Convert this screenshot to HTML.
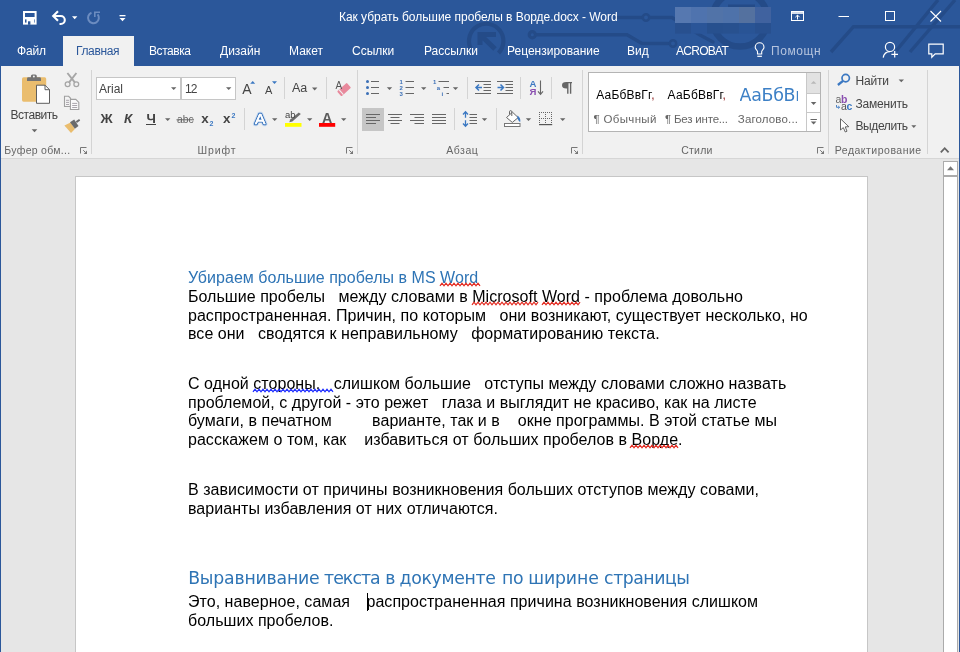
<!DOCTYPE html>
<html lang="ru">
<head>
<meta charset="utf-8">
<title>Как убрать большие пробелы в Ворде.docx - Word</title>
<style>
html,body{margin:0;padding:0;}
body{width:960px;height:652px;overflow:hidden;background:#e6e6e6;font-family:"Liberation Sans",sans-serif;font-size:12px;color:#444;}
#app{position:relative;width:960px;height:652px;overflow:hidden;will-change:transform;}
.abs{position:absolute;}
#top{position:absolute;left:0;top:0;width:960px;height:66px;background:#2b579a;overflow:hidden;}
#top .t{position:absolute;color:#fff;font-size:12px;line-height:14px;white-space:pre;}
#ribbon{position:absolute;left:1px;top:66px;width:958px;height:92px;background:#f1f1f1;}
#ribbon .l{position:absolute;white-space:pre;font-size:12px;line-height:14px;color:#444;}
#ribbon .gl{position:absolute;white-space:pre;font-size:12px;line-height:14px;color:#666;}
.vsep{position:absolute;width:1px;background:#d4d4d4;}
svg{position:absolute;overflow:visible;}
#doc{position:absolute;left:1px;top:159px;width:958px;height:493px;background:#e6e6e6;}
#page{position:absolute;left:75px;top:176px;width:791px;height:480px;background:#fff;border:1px solid #c6c6c6;}
.ln{position:absolute;left:188px;white-space:pre;font-family:"Liberation Sans",sans-serif;font-size:16px;line-height:18px;color:#000;letter-spacing:0.037px;}
.h1{color:#2e74b5;}
.h2{font-family:"DejaVu Sans",sans-serif;font-size:17.3px;line-height:20px;color:#2e74b5;letter-spacing:-0.37px;}
</style>
</head>
<body>
<div id="app">
<!--TOP-->
<div id="top">
<!--TOPCONTENT-->
<svg style="left:0;top:0" width="960" height="66" viewBox="0 0 960 66">
<g fill="none" stroke="#244b88" stroke-width="3.4" stroke-linecap="round">
<path d="M498.5 53 A17.2 17.2 0 1 0 470.5 48" stroke-width="4.2" stroke-linecap="butt"/>
<path d="M480 45 V34.5 H496 M481 35.5 L495 49" stroke-width="5" stroke-linecap="butt"/>
<circle cx="532.3" cy="34.8" r="3.1" stroke-width="3.2"/>
<path d="M536.5 34.8 H627 L642 43.5 H668"/>
<circle cx="673" cy="43.5" r="3.2" stroke-width="2.5"/>
<path d="M616 17.5 H642"/>
<circle cx="646" cy="17.5" r="3.2" stroke-width="2.5"/>
<path d="M650 17.5 H672 L700 35 L713 42"/>
<circle cx="740" cy="19" r="27.5" stroke-width="6.5"/>
<path d="M831 52 L853.5 26.7 H960" stroke-linecap="butt"/>
<path d="M896.5 50.5 L938 0" stroke-linecap="butt"/>
<path d="M910 52 L955 0" stroke-linecap="butt"/>
</g>
<!-- save -->
<rect x="24" y="12" width="11.6" height="11.6" fill="none" stroke="#fff" stroke-width="2"/>
<rect x="24" y="17" width="12" height="2.4" fill="#fff"/>
<rect x="26.5" y="19" width="7.5" height="5" fill="#fff"/>
<rect x="28" y="21.3" width="2.4" height="3.5" fill="#2b579a"/>
<!-- undo -->
<g fill="none" stroke="#fff" stroke-width="2.1">
<path d="M53.5 16 H60.8 A4 4 0 0 1 60.8 24 H59.5"/>
<path d="M58 11.2 L53.2 16 L58 20.8"/>
</g>
<path d="M72 16.2 H77.4 L74.7 19.3 Z" fill="#fff"/>
<!-- redo dim -->
<g fill="none" stroke="#6c8cc0" stroke-width="2">
<path d="M97.6 14.4 A5.4 5.4 0 1 1 91.5 12.8"/>
<path d="M94.8 17 V12.2 H100" stroke-width="1.6"/>
</g>
<!-- customize -->
<rect x="119.5" y="15" width="6" height="1.3" fill="#fff"/>
<path d="M119.5 18 H125.5 L122.5 21.3 Z" fill="#fff"/>
<!-- user blur -->
<rect x="728" y="4.5" width="27" height="2.6" fill="#244b88"/>
<g>
<rect x="675" y="7" width="16" height="16" fill="#5678b0"/>
<rect x="675" y="23" width="16" height="10.6" fill="#28508f"/>
<rect x="691" y="7" width="16" height="16" fill="#4f73ae"/>
<rect x="691" y="23" width="16" height="10.6" fill="#2a5598"/>
<rect x="707" y="7" width="16" height="16" fill="#5173a8"/>
<rect x="707" y="23" width="16" height="10.6" fill="#27508e"/>
<rect x="723" y="7" width="16" height="16" fill="#4e72aa"/>
<rect x="723" y="23" width="16" height="10.6" fill="#28518f"/>
<rect x="739" y="7" width="16" height="16" fill="#54719f"/>
<rect x="739" y="23" width="16" height="10.6" fill="#295495"/>
<rect x="755" y="7" width="16" height="16" fill="#40629f"/>
<rect x="755" y="23" width="16" height="10.6" fill="#28508f"/>
</g>
<!-- ribbon display options -->
<g fill="none" stroke="#fff" stroke-width="1">
<rect x="791.5" y="11.5" width="12" height="9"/>
<path d="M791.5 13 H803.5" stroke-width="1.6"/>
<path d="M797.5 19.5 V15.2 M795.4 17.2 L797.5 15.1 L799.6 17.2"/>
</g>
<!-- minimize -->
<rect x="838.5" y="16" width="10.5" height="1" fill="#fff"/>
<!-- maximize -->
<rect x="885.5" y="11.5" width="9" height="9" fill="none" stroke="#fff" stroke-width="1"/>
<!-- close -->
<path d="M930.5 11 L941 21.5 M941 11 L930.5 21.5" stroke="#fff" stroke-width="1.1" fill="none"/>
<!-- lightbulb -->
<g fill="none" stroke="#fff" stroke-width="1.1">
<path d="M757.5 54 V51.6 C757.5 50.1 755.2 49.3 755.2 47.2 A4.4 4.4 0 0 1 764 47.2 C764 49.3 761.7 50.1 761.7 51.6 V54 Z"/>
<path d="M757.3 56.3 H761.9" stroke-width="1.2"/>
</g>
<!-- share -->
<g fill="none" stroke="#fff" stroke-width="1.2">
<circle cx="890" cy="46.9" r="4.6"/>
<path d="M883.2 57.6 C883.9 53.8 886.5 51.6 890 51.6"/>
<path d="M894.7 51 V57.6 M891.4 54.3 H898" stroke-width="1.2"/>
</g>
<!-- comment -->
<path d="M928.8 44.2 H943.2 V53.8 H935.2 L931.8 57.2 V53.8 H928.8 Z" fill="none" stroke="#fff" stroke-width="1.2"/>
</svg>
<div class="abs" style="left:63px;top:36px;width:71px;height:30px;background:#f1f1f1"></div>
<div class="t" style="left:339px;top:10px;letter-spacing:-0.04px">Как убрать большие пробелы в Ворде.docx - Word</div>
<div class="t" style="left:17px;top:44px;letter-spacing:-0.2px">Файл</div>
<div class="t" style="left:76px;top:44px;color:#2b579a;letter-spacing:-0.36px">Главная</div>
<div class="t" style="left:149px;top:44px;letter-spacing:-0.43px">Вставка</div>
<div class="t" style="left:220px;top:44px">Дизайн</div>
<div class="t" style="left:289px;top:44px">Макет</div>
<div class="t" style="left:352px;top:44px">Ссылки</div>
<div class="t" style="left:424px;top:44px">Рассылки</div>
<div class="t" style="left:507px;top:44px">Рецензирование</div>
<div class="t" style="left:627px;top:44px">Вид</div>
<div class="t" style="left:676px;top:44px;letter-spacing:-0.73px">ACROBAT</div>
<div class="t" style="left:771px;top:44px;color:#b5c4de;letter-spacing:0.6px">Помощн</div>
<!--/TOPCONTENT-->
</div>
<!--RIBBON-->
<div id="ribbon">
<!--RIBBONCONTENT-->
<div id="rc" style="position:absolute;left:-1px;top:-66px;width:960px;height:160px">
<!-- separators -->
<div class="vsep" style="left:91px;top:70px;height:84px"></div>
<div class="vsep" style="left:357px;top:70px;height:84px"></div>
<div class="vsep" style="left:582px;top:70px;height:84px"></div>
<div class="vsep" style="left:828px;top:70px;height:84px"></div>
<div class="vsep" style="left:927px;top:70px;height:84px"></div>
<div class="vsep" style="left:284px;top:77px;height:22px"></div>
<div class="vsep" style="left:326px;top:77px;height:22px"></div>
<div class="vsep" style="left:244px;top:108px;height:22px"></div>
<div class="vsep" style="left:467px;top:77px;height:22px"></div>
<div class="vsep" style="left:520px;top:77px;height:22px"></div>
<div class="vsep" style="left:551px;top:77px;height:22px"></div>
<div class="vsep" style="left:454px;top:108px;height:22px"></div>
<div class="vsep" style="left:496px;top:108px;height:22px"></div>
<!-- font boxes -->
<div class="abs" style="left:96px;top:77px;width:83px;height:21px;background:#fff;border:1px solid #c6c6c6"></div>
<div class="abs" style="left:181px;top:77px;width:53px;height:21px;background:#fff;border:1px solid #c6c6c6"></div>
<!-- align-left selected -->
<div class="abs" style="left:362px;top:108px;width:22px;height:23px;background:#c6c6c6"></div>
<!-- gallery -->
<div class="abs" style="left:588px;top:72px;width:232px;height:59px;background:#fff;border:1px solid #b4b4b4;box-sizing:content-box;width:231px;height:58px"></div>
<div class="abs" style="left:807px;top:73px;width:13px;height:20px;background:#e2e2e2"></div>
<div class="abs" style="left:806px;top:73px;width:1px;height:58px;background:#c8c8c8"></div>
<div class="abs" style="left:807px;top:93px;width:13px;height:1px;background:#c8c8c8"></div>
<div class="abs" style="left:807px;top:112px;width:13px;height:1px;background:#c8c8c8"></div>
<svg style="left:0;top:0" width="960" height="160" viewBox="0 0 960 160" font-family="Liberation Sans, sans-serif">
<!-- paste -->
<rect x="22" y="77.3" width="24.2" height="24.4" rx="1.6" fill="#eabd6e"/>
<path d="M27 81 V78.6 A1.4 1.4 0 0 1 28.4 77.2 H39.6 A1.4 1.4 0 0 1 41 78.6 V81 Z" fill="#737373"/>
<path d="M30.9 78 V76 A1.6 1.6 0 0 1 32.5 74.4 H35.2 A1.6 1.6 0 0 1 36.8 76 V78 Z" fill="#737373"/>
<circle cx="33.85" cy="76.5" r="1" fill="#f1f1f1"/>
<path d="M36.5 85.2 H45 L49.5 89.7 V103.3 H36.5 Z" fill="#fff" stroke="#5e5e5e" stroke-width="1"/>
<path d="M45 85.2 V89.7 H49.5" fill="none" stroke="#5e5e5e" stroke-width="1"/>
<path d="M31.7 129.2 H37.3 L34.5 132.2 Z" fill="#666"/>
<!-- scissors -->
<g fill="none" stroke="#a6a6a6" stroke-width="1.3">
<circle cx="67.6" cy="84.2" r="2.4"/>
<circle cx="76.3" cy="84.2" r="2.4"/>
<path d="M67.4 73 L74.8 82.4 M76.4 73 L69.1 82.4" stroke-width="1.9"/>
</g>
<!-- copy -->
<g fill="#f4f4f4" stroke="#a0a0a0" stroke-width="1.1">
<path d="M64.5 96.3 H68.6 L70.6 98.3 V106.5 H64.5 Z"/>
<path d="M70.4 99.4 H75.8 L78.8 102.4 V109.5 H70.4 Z" fill="#fafafa"/>
</g>
<g stroke="#aaa6ad" stroke-width="1" fill="none">
<path d="M66 100.3 H69 M66 102.4 H69 M66 104.5 H69 M72.2 103.4 H77.2 M72.2 105.5 H77.2 M72.2 107.5 H77.2"/>
</g>
<!-- format painter -->
<path d="M64.4 125.4 L70.6 122.6 L74.9 129 L71 132.9 Z" fill="#eabd6e"/>
<path d="M70 122.3 L74.2 119.6 L78.5 125.9 L74.9 128.7 Z" fill="#6b6b6b"/>
<path d="M75.8 121.2 L79.1 118.9 L80.2 120.5 L76.9 122.9 Z" fill="#6b6b6b"/>
<!-- launchers -->
<g fill="none" stroke="#777" stroke-width="1">
<path d="M80.5 153.5 V147.5 H86.5"/>
<path d="M83.2 150.2 L85.5 152.5"/>
<path d="M87 150.6 V154 H83.6 Z" fill="#777" stroke="none"/>
</g>
<g transform="translate(266 0)" fill="none" stroke="#777" stroke-width="1">
<path d="M80.5 153.5 V147.5 H86.5"/>
<path d="M83.2 150.2 L85.5 152.5"/>
<path d="M87 150.6 V154 H83.6 Z" fill="#777" stroke="none"/>
</g>
<g transform="translate(491 0)" fill="none" stroke="#777" stroke-width="1">
<path d="M80.5 153.5 V147.5 H86.5"/>
<path d="M83.2 150.2 L85.5 152.5"/>
<path d="M87 150.6 V154 H83.6 Z" fill="#777" stroke="none"/>
</g>
<g transform="translate(737 0)" fill="none" stroke="#777" stroke-width="1">
<path d="M80.5 153.5 V147.5 H86.5"/>
<path d="M83.2 150.2 L85.5 152.5"/>
<path d="M87 150.6 V154 H83.6 Z" fill="#777" stroke="none"/>
</g>
<!-- font box arrows -->
<path d="M171 87.2 H176.4 L173.7 90 Z" fill="#666"/>
<path d="M226 87.2 H231.4 L228.7 90 Z" fill="#666"/>
<!-- underline for Ч and arrow -->
<rect x="146" y="124" width="10" height="1" fill="#444"/>
<path d="M165 118.2 H170.4 L167.7 121 Z" fill="#666"/>
<!-- abc strike -->
<rect x="176.5" y="119.3" width="17.5" height="1" fill="#666"/>
<!-- grow/shrink -->
<path d="M250.2 83.8 H255.2 L252.7 81 Z" fill="#3b78c2"/>
<path d="M272 81.2 H277 L274.5 84 Z" fill="#3b78c2"/>
<path d="M312 87.6 H317.4 L314.7 90.4 Z" fill="#666"/>
<!-- clear formatting eraser -->
<g transform="rotate(-42 344 89.5)">
<rect x="337.5" y="86.3" width="13" height="6.6" rx="1" fill="#e8899c"/>
<rect x="339.6" y="86.3" width="1.1" height="6.6" fill="#f1f1f1"/>
</g>
<!-- text effects arrows etc -->
<path d="M272 118.2 H277.4 L274.7 121 Z" fill="#666"/>
<rect x="285" y="123" width="16.5" height="3.8" fill="#ffff00"/>
<path d="M289.3 122.3 L290.2 119.6 L298.8 112.4 L300.8 114 L292.4 121.6 Z" fill="#6d6d6d"/>
<path d="M307 118.2 H312.4 L309.7 121 Z" fill="#666"/>
<rect x="319" y="123" width="16.2" height="3.8" fill="#ff0000"/>
<path d="M341 118.2 H346.4 L343.7 121 Z" fill="#666"/>
<!-- bullets -->
<g fill="#3b6fb6"><circle cx="367.5" cy="81.5" r="1.5"/><circle cx="367.5" cy="87.5" r="1.5"/><circle cx="367.5" cy="93.5" r="1.5"/></g>
<g stroke="#666" stroke-width="1" fill="none">
<path d="M371 81.5 H379 M371 87.5 H379 M371 93.5 H379"/>
<path d="M405.5 81.5 H414 M405.5 87.5 H414 M405.5 93.5 H414"/>
<path d="M438.5 81.5 H449 M443.5 87.5 H449 M446.5 93.5 H449"/>
</g>
<path d="M386.8 87.2 H392.2 L389.5 90 Z" fill="#666"/>
<path d="M421 87.2 H426.4 L423.7 90 Z" fill="#666"/>
<path d="M452.8 87.2 H458.2 L455.5 90 Z" fill="#666"/>
<g fill="#3b6fb6" font-size="6" font-weight="700">
<text x="399.6" y="84">1</text><text x="399.6" y="90">2</text><text x="399.6" y="96">3</text>
<text x="433" y="84">1</text><text x="436.8" y="90">a</text><text x="441.6" y="96">i</text>
</g>
<!-- indent -->
<g stroke="#666" stroke-width="1" fill="none">
<path d="M475 81.5 H491 M483.5 84.5 H491 M483.5 87.5 H491 M483.5 90.5 H491 M475 93.5 H491"/>
<path d="M497 81.5 H513 M505.5 84.5 H513 M505.5 87.5 H513 M505.5 90.5 H513 M497 93.5 H513"/>
</g>
<g stroke="#3b78c2" stroke-width="1.5" fill="none">
<path d="M476 87.5 H482 M479 84.5 L476 87.5 L479 90.5"/>
<path d="M497.5 87.5 H503.5 M500.5 84.5 L503.5 87.5 L500.5 90.5"/>
</g>
<!-- sort -->
<text x="529.6" y="87" font-size="9.6" font-weight="700" fill="#3b78c2">A</text>
<text x="529.6" y="94.8" font-size="9.6" font-weight="700" fill="#8a4fb0">Я</text>
<path d="M540.5 80.5 V94 M538 91.3 L540.5 94.3 L543 91.3" stroke="#666" stroke-width="1.1" fill="none"/>
<!-- pilcrow -->
<path d="M566.3 82 H572 V83.3 H571.3 V93.8 H569.9 V83.3 H568.5 V93.8 H567.1 V88.6 H566.3 A4.3 3.3 0 0 1 566.3 82 Z" fill="#666"/>
<!-- align icons -->
<g stroke="#666" stroke-width="1.1" fill="none">
<path d="M366 114.5 H380 M366 117.5 H376 M366 120.5 H380 M366 123.5 H376"/>
<path d="M388 114.5 H402 M390.5 117.5 H399.5 M388 120.5 H402 M390.5 123.5 H399.5"/>
<path d="M410 114.5 H424 M414.5 117.5 H424 M410 120.5 H424 M414.5 123.5 H424"/>
<path d="M432 114.5 H446 M432 117.5 H446 M432 120.5 H446 M432 123.5 H446"/>
<path d="M469.5 114.5 H477 M469.5 117.5 H477 M469.5 120.5 H477 M469.5 123.5 H477"/>
</g>
<!-- line spacing arrows -->
<g stroke="#3b78c2" stroke-width="1.3" fill="none">
<path d="M465.5 111.8 V117.8 M465.5 120.2 V126.2 M463 114.5 L465.5 111.8 L468 114.5 M463 123.5 L465.5 126.2 L468 123.5"/>
</g>
<path d="M481.8 118.2 H487.2 L484.5 121 Z" fill="#666"/>
<!-- shading -->
<rect x="504.5" y="123.5" width="15.5" height="3" fill="#fff" stroke="#777" stroke-width="1"/>
<path d="M506.5 117.5 L512.5 112.2 L518.2 117.6 L512.3 122.4 Z" fill="#fff" stroke="#666" stroke-width="1"/>
<path d="M509.5 114.5 V111.8 Q509.5 110.6 510.6 110.6 Q511.8 110.6 511.8 111.8 V116" fill="none" stroke="#666" stroke-width="1"/>
<path d="M517.3 115.5 Q521 117.5 520.2 122.2 Q518.2 120.5 517.5 118.5 Z" fill="#3b78c2"/>
<path d="M525.8 118.2 H531.2 L528.5 121 Z" fill="#666"/>
<!-- borders -->
<g stroke="#666" stroke-width="1" fill="none" stroke-dasharray="1 1">
<path d="M539 112.5 H552 M539 118.5 H552 M539.5 112 V124 M545.5 112 V124 M551.5 112 V124"/>
</g>
<rect x="539" y="124" width="13.2" height="1.2" fill="#555"/>
<path d="M560 118.2 H565.4 L562.7 121 Z" fill="#666"/>
<!-- gallery scroll arrows -->
<path d="M810.8 83.8 H816.4 L813.6 81 Z" fill="#b9b9b9"/>
<path d="M810.8 102 H816.4 L813.6 105 Z" fill="#666"/>
<rect x="810.5" y="119" width="6.4" height="1" fill="#666"/>
<path d="M810.8 121.6 H816.4 L813.6 124.6 Z" fill="#666"/>
<!-- search -->
<circle cx="845.7" cy="78.1" r="3.7" fill="none" stroke="#3b78c2" stroke-width="1.7"/>
<path d="M843 80.8 L837.9 85" stroke="#3b78c2" stroke-width="2.3" fill="none"/>
<path d="M898.6 79.4 H904 L901.3 82.2 Z" fill="#666"/>
<!-- replace -->
<text x="835.4" y="102.7" font-size="10.5" fill="#666">a</text>
<text x="841" y="102.7" font-size="10.5" fill="#8a4fb0" font-weight="700">b</text>
<text x="841" y="109.8" font-size="10.5" fill="#555">a</text>
<text x="846.6" y="109.8" font-size="10.5" fill="#3b78c2" font-weight="700">c</text>
<path d="M836.5 105 V107.3 H839.5 M838.2 106 L839.6 107.3 L838.2 108.6" stroke="#3b78c2" stroke-width="0.9" fill="none"/>
<!-- select cursor -->
<path d="M840.5 118.8 V130 L843.3 127.6 L845.3 132 L847 131.2 L845.2 126.9 L848.8 126.7 Z" fill="#fff" stroke="#555" stroke-width="0.9"/>
<path d="M911.3 125.3 H916.3 L913.8 128 Z" fill="#666"/>
<!-- collapse -->
<path d="M940.8 152.3 L944.7 148.2 L948.6 152.3" stroke="#666" stroke-width="1.8" fill="none"/>
<!-- text effects A -->
<text x="254.9" y="123.7" font-size="15.5" fill="none" stroke="#b3cff0" stroke-width="4.4" stroke-linejoin="round" opacity=".6">A</text>
<text x="254.9" y="123.7" font-size="15.5" fill="#fff" stroke="#3470bb" stroke-width="2.5" stroke-linejoin="round" style="paint-order:stroke">A</text>
<text x="254.9" y="123.7" font-size="15.5" fill="#fff" stroke="#fff" stroke-width="0.5">A</text>
</svg>

<div class="l" style="left:10.4px;top:108px;font-size:12px;letter-spacing:-0.45px">Вставить</div>
<div class="gl" style="left:4.3px;top:143px;font-size:10.5px;letter-spacing:0.3px">Буфер обм...</div>
<div class="gl" style="left:197.5px;top:143px;font-size:10.5px;letter-spacing:0.9px">Шрифт</div>
<div class="gl" style="left:446.2px;top:143px;font-size:10.5px;letter-spacing:0.56px">Абзац</div>
<div class="gl" style="left:681.2px;top:143px;font-size:10.5px;letter-spacing:0.24px">Стили</div>
<div class="gl" style="left:834.8px;top:143px;font-size:10.5px;letter-spacing:0.49px">Редактирование</div>
<div class="l" style="left:99px;top:82px">Arial</div>
<div class="l" style="left:185px;top:82px;letter-spacing:-1px">12</div>
<div class="l" style="left:100.6px;top:112px;font-size:13.4px;font-weight:700">Ж</div>
<div class="l" style="left:124px;top:112px;font-size:13.4px;font-weight:700;font-style:italic">К</div>
<div class="l" style="left:146.5px;top:112px;font-size:13.4px;font-weight:700">Ч</div>
<div class="l" style="left:177px;top:114px;font-size:10.3px;line-height:12px;color:#666">abc</div>
<div class="l" style="left:201.2px;top:112px;font-size:13.4px;font-weight:700">x</div>
<div class="l" style="left:209.5px;top:119.5px;font-size:7px;line-height:8px;font-weight:700;color:#3b78c2">2</div>
<div class="l" style="left:223px;top:112px;font-size:13.4px;font-weight:700">x</div>
<div class="l" style="left:231.5px;top:111.5px;font-size:7px;line-height:8px;font-weight:700;color:#3b78c2">2</div>
<div class="l" style="left:242.2px;top:81px;font-size:14px;line-height:16px">A</div>
<div class="l" style="left:265px;top:83.5px;font-size:11px;line-height:13px">A</div>
<div class="l" style="left:292px;top:80.5px;font-size:12.5px;line-height:14px">Aa</div>
<div class="l" style="left:335.6px;top:80px;font-size:10px;line-height:11px;color:#555">A</div>
<div class="l" style="left:285px;top:109.5px;font-size:9.5px;line-height:10px;color:#444">ab</div>
<div class="l" style="left:322px;top:109.5px;font-size:14.2px;line-height:16px;font-weight:700;color:#5c5c5c">A</div>
<div class="l" style="left:596.2px;top:88px;color:#000;letter-spacing:0.2px">АаБбВвГг<span style="color:#8b1a1a">,</span></div>
<div class="l" style="left:667.6px;top:88px;color:#000;letter-spacing:0.2px">АаБбВвГг<span style="color:#8b1a1a">,</span></div>
<div class="l" style="left:739.6px;top:85.3px;width:58.5px;overflow:hidden;font-family:'DejaVu Sans',sans-serif;font-size:17.4px;line-height:20px;letter-spacing:-0.3px;color:#3d80c6">АаБбВв</div>
<div class="gl" style="left:593.4px;top:112px;font-size:11.5px;letter-spacing:0.35px">¶ Обычный</div>
<div class="gl" style="left:665px;top:112px;font-size:11.5px;letter-spacing:-0.2px">¶ Без инте...</div>
<div class="gl" style="left:737.8px;top:112px;font-size:11.5px;letter-spacing:0.15px">Заголово...</div>
<div class="l" style="left:855.5px;top:74px;letter-spacing:-0.2px">Найти</div>
<div class="l" style="left:855.5px;top:97px;letter-spacing:-0.21px">Заменить</div>
<div class="l" style="left:855.5px;top:119px;letter-spacing:-0.4px">Выделить</div>

</div>
<!--/RIBBONCONTENT-->
</div>
<div class="abs" style="left:0;top:66px;width:1px;height:586px;background:#2b579a"></div>
<div class="abs" style="left:959px;top:66px;width:1px;height:586px;background:#2b579a"></div>
<div class="abs" style="left:1px;top:158px;width:958px;height:1px;background:#d6d6d6"></div>
<!--DOC-->
<div id="page"></div>
<!--DOCTEXT-->
<div class="ln h1" style="top:268.5px">Убираем большие пробелы в MS Word</div>
<div class="ln" style="top:288px">Большие пробелы   между словами в Microsoft Word - проблема довольно</div>
<div class="ln" style="top:306.5px">распространенная. Причин, по которым   они возникают, существует несколько, но</div>
<div class="ln" style="top:325px">все они   сводятся к неправильному   форматированию текста.</div>
<div class="ln" style="top:374.5px">С одной стороны,   слишком большие   отступы между словами сложно назвать</div>
<div class="ln" style="top:394px">проблемой, с другой - это режет   глаза и выглядит не красиво, как на листе</div>
<div class="ln" style="top:411.5px">бумаги, в печатном         варианте, так и в    окне программы. В этой статье мы</div>
<div class="ln" style="top:431px">расскажем о том, как    избавиться от больших пробелов в Ворде.</div>
<div class="ln" style="top:480.5px">В зависимости от причины возникновения больших отступов между совами,</div>
<div class="ln" style="top:500px">варианты избавления от них отличаются.</div>
<div class="ln h2" style="top:568px;left:0;width:900px;height:20px"><span style="position:absolute;left:188.2px;top:0;letter-spacing:-0.195px">Выравнивание </span><span style="position:absolute;left:324px;top:0;letter-spacing:-0.92px">текста </span><span style="position:absolute;left:385.2px;top:0;letter-spacing:-0.37px">в </span><span style="position:absolute;left:399.6px;top:0;letter-spacing:-0.31px">документе </span><span style="position:absolute;left:501.9px;top:0;letter-spacing:-0.07px">по </span><span style="position:absolute;left:528.2px;top:0;letter-spacing:-0.12px">ширине </span><span style="position:absolute;left:604.1px;top:0;letter-spacing:-0.47px">страницы</span></div>
<div class="ln" style="top:592.5px">Это, наверное, самая   <span style="margin-left:3px"></span>распространенная причина возникновения слишком</div>
<div class="ln" style="top:612px">больших пробелов.</div>
<div class="abs" style="left:367px;top:593px;width:1px;height:18px;background:#000"></div>
<svg class="sq" style="left:0;top:0" width="960" height="652"><polyline points="440,285.8 442,283.2 444,285.8 446,283.2 448,285.8 450,283.2 452,285.8 454,283.2 456,285.8 458,283.2 460,285.8 462,283.2 464,285.8 466,283.2 468,285.8 470,283.2 472,285.8 474,283.2 476,285.8 478,283.2 480,285.8" fill="none" stroke="#e32a20" stroke-width="1.3"/></svg>
<svg class="sq" style="left:0;top:0" width="960" height="652"><polyline points="472,304.8 474,302.2 476,304.8 478,302.2 480,304.8 482,302.2 484,304.8 486,302.2 488,304.8 490,302.2 492,304.8 494,302.2 496,304.8 498,302.2 500,304.8 502,302.2 504,304.8 506,302.2 508,304.8 510,302.2 512,304.8 514,302.2 516,304.8 518,302.2 520,304.8 522,302.2 524,304.8 526,302.2 528,304.8 530,302.2 532,304.8 534,302.2 536,304.8 538,302.2" fill="none" stroke="#e32a20" stroke-width="1.3"/></svg>
<svg class="sq" style="left:0;top:0" width="960" height="652"><polyline points="542,304.8 544,302.2 546,304.8 548,302.2 550,304.8 552,302.2 554,304.8 556,302.2 558,304.8 560,302.2 562,304.8 564,302.2 566,304.8 568,302.2 570,304.8 572,302.2 574,304.8 576,302.2 578,304.8 580,302.2" fill="none" stroke="#e32a20" stroke-width="1.3"/></svg>
<svg class="sq" style="left:0;top:0" width="960" height="652"><polyline points="630,447.8 632,445.2 634,447.8 636,445.2 638,447.8 640,445.2 642,447.8 644,445.2 646,447.8 648,445.2 650,447.8 652,445.2 654,447.8 656,445.2 658,447.8 660,445.2 662,447.8 664,445.2 666,447.8 668,445.2 670,447.8 672,445.2 674,447.8 676,445.2 678,447.8" fill="none" stroke="#e32a20" stroke-width="1.3"/></svg>
<svg class="sq" style="left:0;top:0" width="960" height="652"><polyline points="253,391.8 255,389.2 257,391.8 259,389.2 261,391.8 263,389.2 265,391.8 267,389.2 269,391.8 271,389.2 273,391.8 275,389.2 277,391.8 279,389.2 281,391.8 283,389.2 285,391.8 287,389.2 289,391.8 291,389.2 293,391.8 295,389.2 297,391.8 299,389.2 301,391.8 303,389.2 305,391.8 307,389.2 309,391.8 311,389.2 313,391.8 315,389.2 317,391.8 319,389.2 321,391.8 323,389.2 325,391.8 327,389.2 329,391.8 331,389.2 333,391.8" fill="none" stroke="#1f2eff" stroke-width="1.3"/></svg>
<!--/DOCTEXT-->
<!--SCROLL-->
<div class="abs" style="left:943px;top:161px;width:13px;height:13px;background:#fff;border:1px solid #ababab"></div>
<div class="abs" style="left:943px;top:176px;width:13px;height:480px;background:#fff;border:1px solid #ababab"></div>
<svg style="left:943px;top:161px" width="15" height="15"><path d="M4 9.2 H11 L7.5 5.2 Z" fill="#777"/></svg>

</div>
</body>
</html>
